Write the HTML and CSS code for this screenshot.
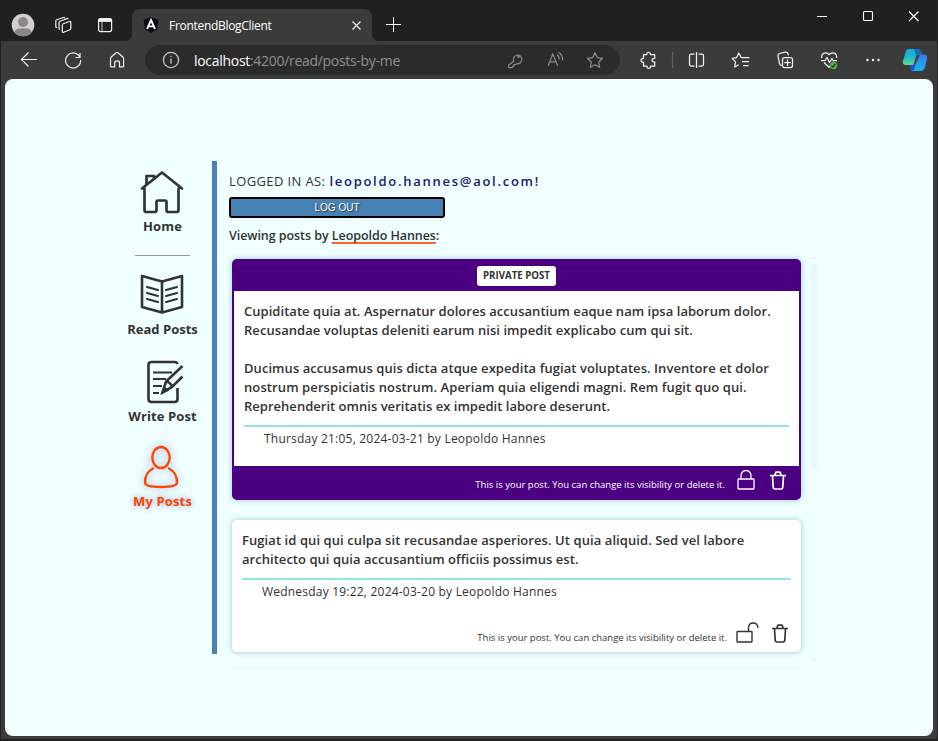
FILE: index.html
```html
<!DOCTYPE html>
<html lang="en">
<head>
<meta charset="utf-8">
<title>FrontendBlogClient</title>
<link rel="stylesheet" href="styles.css">
</head>
<body>
<div class="window">
  <header class="tabbar">
    <svg class="left-icons" width="132" height="41" viewBox="0 0 132 41" fill="none" stroke="#f2f2f2" stroke-width="1.2">
      <circle cx="23" cy="25" r="11.3" fill="#d2d0ce" stroke="none"/>
      <circle cx="23" cy="22" r="5" fill="#8a8886" stroke="none"/>
      <path d="M14.5 32.4C15 28.9 18 28.3 23 28.3s8 .6 8.500 4.100A11.300 11.300 0 0 1 14.500 32.400z" fill="#8a8886" stroke="none"/>
      <path d="M62.500 24l7-2.500q1.300-.4 1.300 1v6q0 .8-.9 1.200l-6.200 2.500q-1.400.5-1.400-1v-6q0-.9.9-1.200z"/>
      <path d="M60 29.500l-.9-.5V22.500q0-.9.8-1.200l7.500-2.800.9.500M57 27.800l-1.200-.7v-6q0-1 .9-1.300l7.300-2.500 1 .6"/>
      <rect x="98.600" y="18.600" width="13" height="13" rx="2"/><path d="M102 22v9.500" stroke-width=".8"/><path d="M99 20.200h12.500" stroke-width="3.400"/>
    </svg>
    <div class="tab">
      <svg class="favicon" width="16" height="16" viewBox="0 0 16 16"><path d="M8 .3l7.400 2.500-1.100 9.700L8 15.800l-6.300-3.300L.6 2.800z" fill="#080b17"/><path d="M4 12l4-9 4 9M5.300 9.400h5.400" fill="none" stroke="#fff" stroke-width="1.900"/></svg>
      <span class="tab-title">FrontendBlogClient</span>
      <svg class="tab-close" width="9" height="9" viewBox="0 0 9 9" stroke="#eee" stroke-width="1.200"><path d="M.5.5l8 8M8.500.5l-8 8"/></svg>
    </div>
    <svg class="new-tab" width="15" height="15" viewBox="0 0 15 15" stroke="#fff"><path d="M7.500 0v15M0 7.500h15"/></svg>
    <svg class="window-buttons" width="120" height="41" viewBox="0 0 120 41" fill="none" stroke="#fff" stroke-width="1.100"><path d="M0 16.500h10M92 11.500l9.500 9.500M101.500 11.500L92 21"/><rect x="46.500" y="11.500" width="9" height="9" rx="1"/></svg>
  </header>
  <nav class="toolbar">
    <svg class="nav-icons" width="145" height="38" viewBox="0 41 145 38" fill="none" stroke="#f0f0f0" stroke-width="1.200">
      <path d="M37 59.500H21.500M28.500 52.500l-7 7 7 7"/>
      <path d="M80 57.500A7.500 7.500 0 1 0 80.600 60M80 53v4.500h-4.600"/>
      <path d="M110.500 58.500q0-.9.7-1.500l5-4.200q.9-.7 1.700 0l5 4.200q.7.600.7 1.500v7.500q0 .9-.9.900h-3.200v-4.200q0-1.800-2.400-1.800t-2.400 1.800v4.200h-3.200q-1 0-1-.9z"/>
    </svg>
    <div class="address">
      <svg class="info" width="18" height="18" viewBox="0 0 18 18" fill="none" stroke="#c8c8c8" stroke-width="1.300"><circle cx="9" cy="9" r="7.600"/><path d="M9 7.800v5M9 4.800v1.500"/></svg>
      <span class="url"><b>localhost</b>:4200/read/posts-by-me</span>
      <svg class="address-icons" width="100" height="20" viewBox="506 50 100 20" fill="none" stroke="#8c8c8c" stroke-width="1.200">
        <path d="M513.700 61.200a4.300 4.300 0 1 1 3.200 2.500l-1.200.8-1.600.2-.2 1.500-1.400.4-.6 1h-3.200v-2.700z" stroke-linejoin="round"/><circle cx="518.500" cy="56.800" r=".6"/>
        <path d="M548 66l4.800-12 4.900 12M549.700 61.800h6.300M557 54.500q2.500 2 2 5M558.500 52.200q4.500 3 4 8"/>
        <path d="M595 52.700l2.300 4.900 5.300.7-3.900 3.700 1 5.300-4.700-2.600-4.700 2.600 1-5.300-3.900-3.700 5.300-.7z" stroke-linejoin="round"/>
      </svg>
    </div>
    <svg class="toolbar-icons" width="300" height="38" viewBox="633 41 300 38" fill="none" stroke="#f0f0f0" stroke-width="1.250" stroke-linejoin="round">
      <defs><linearGradient id="teal" x1="0" y1="0" x2="0" y2="1"><stop offset="0" stop-color="#16a7e8"/><stop offset=".5" stop-color="#20b6c8"/><stop offset="1" stop-color="#61dc88"/></linearGradient><linearGradient id="blue" x1="0" y1="0" x2="0" y2="1"><stop offset="0" stop-color="#3a78e5"/><stop offset="1" stop-color="#12b8f5"/></linearGradient></defs>
      <path d="M643.500 54.500h3.200c-.3-3 4-3 3.700 0h4.300v3.800c-3.600-.4-3.600 4 0 3.700v4.200h-4c.3 3-4 3-3.800 0h-3.400v-3.800c-3.300.2-3.300-4.200 0-4z"/>
      <path d="M672.500 52v16" stroke="#606060"/>
      <path d="M694.500 54h-3.300q-1.700 0-1.700 1.700v8.600q0 1.700 1.700 1.700h3.300M696.500 52v16M698.500 54h3.300q1.700 0 1.700 1.700v8.600q0 1.700-1.700 1.700h-3.300"/>
      <path d="M744 57.500h-2.800L738.800 53l-2.200 4.600-4.300.7 3.200 3.500-.8 5.200 4-2.200M743 57.500h6.500M742 61.500h7M743 65.500h5.500"/>
      <path d="M782 65.500q-2 0-2.500-1.900L778 56q-.3-2 1.500-2.500l6-1.300q2-.2 2.500 1.500l.4 1.700M784.500 57.500h6q2 0 2 2v6q0 2-2 2h-6q-2 0-2-2v-6q0-2 2-2zM787.500 59.500v6.500M784.300 62.500h6.500"/>
      <path d="M821.700 58c-.4-5.500 4.700-6.500 7.300-3.500 3-3.300 8.300-1.500 7.600 3.500M824 62.500l5 4.800 2-2M821 60.500h4l2-3 2.500 5 2.500-4 1 2h4"/>
      <circle cx="833.500" cy="65.500" r="3.700" fill="#4aae52" stroke="none"/><path d="M831.500 66l1.300 1 2.600-3" stroke="#183d1c"/>
      <g fill="#f5f5f5" stroke="none"><circle cx="867.500" cy="60" r="1.200"/><circle cx="873" cy="60" r="1.200"/><circle cx="878.500" cy="60" r="1.200"/></g>
      <g stroke="none"><path d="M910 65l4.500 0 1-1 4.500-9.500h4q4 0 3 4.500l-2 8q-1 4-5 4h-6q-3 0-3-2.500z" fill="url(#blue)"/><path d="M910 65h5l-1 5h-1q-2.300 0-3-3z" fill="#1b4fd8"/><path d="M909 49h9q2 0 3 2.500l1 3.500-4-.5-2 2-2 7q-.5 1.500-2 1.500h-6q-4 0-3-4l2.500-8.500q1-3.500 3.500-3.500z" fill="url(#teal)"/><path d="M914.500 49h4q1.500 0 2.300 2.500l1.200 3.500-4-.5-2 2z" fill="#116bb5"/></g>
    </svg>
  </nav>
  <main class="page">
    <nav class="menu">
      <a class="item home">
        <svg width="44" height="44" viewBox="0 0 44 44" fill="none" stroke="#333" stroke-width="2.700" stroke-linejoin="round" stroke-linecap="round"><path d="M2 18.500L22 2.500l20 16M4.500 18.500V40q0 2 2 2h8q2 0 2-2v-8q0-1.500 1.500-1.500h7q1.500 0 1.500 1.500v8q0 2 2 2h8q2 0 2-2V18.500M6.500 14V6h7.500v2"/></svg>
        <span>Home</span>
      </a>
      <hr>
      <a class="item read">
        <svg width="44" height="42" viewBox="0 0 44 42" fill="none" stroke="#333" stroke-width="2.600" stroke-linejoin="round"><path d="M22 8.500L2 3v31l20 5.500L42 34V3zM22 8.500v31"/><path d="M7 14l11 3M7 20l11 3M7 26l11 3M37 14l-11 3M37 20l-11 3M37 26l-11 3" stroke-linecap="round" stroke-width="2.200"/></svg>
        <span>Read Posts</span>
      </a>
      <a class="item write">
        <svg width="38" height="44" viewBox="0 0 38 44" fill="none" stroke="#333" stroke-width="2.600"><path d="M31.500 4q-.5-2-3-2h-23q-3 0-3 3v34q0 3 3 3h23q3 0 3-3V28"/><path d="M7 12.500h19M7 19h13M7 26h9M7 33h6" stroke-width="2.200"/><path d="M36.500 6L20 21.500l-3.500 11 9.500-5.500L36.500 16.500M20 21.500q5 1 6 5.500"/><path d="M18.500 27l-3 6.500 7-3z" fill="#333" stroke-width="1"/></svg>
        <span>Write Post</span>
      </a>
      <a class="item mine">
        <svg width="36" height="44" viewBox="0 0 36 44" fill="none" stroke="#ff4500" stroke-width="2.400" stroke-linecap="round"><ellipse cx="18" cy="12.500" rx="8.700" ry="10.500"/><path d="M10 23.500C4 26.500 2 31 2 37.500q0 4.500 16 4.500t16-4.500c0-6.500-2-11-8-14"/></svg>
        <span>My Posts</span>
      </a>
    </nav>
    <section class="content">
      <p class="login"><span class="login-label">LOGGED IN AS:</span> <b class="email">leopoldo.hannes@aol.com</b>!</p>
      <button class="logout">LOG OUT</button>
      <p class="viewing"><span>Viewing posts by <u>Leopoldo Hannes</u>:</span></p>
      <div class="feed">
        <div class="posts">
          <article class="post private">
            <header><span>PRIVATE POST</span></header>
            <div class="text">
              <p><span class="l1">Cupiditate quia at. Aspernatur dolores accusantium eaque nam ipsa laborum dolor.</span><br><span class="l2">Recusandae voluptas deleniti earum nisi impedit explicabo cum qui sit.</span></p>
              <p><span class="l3">Ducimus accusamus quis dicta atque expedita fugiat voluptates. Inventore et dolor</span><br><span class="l4">nostrum perspiciatis nostrum. Aperiam quia eligendi magni. Rem fugit quo qui.</span><br><span class="l5">Reprehenderit omnis veritatis ex impedit labore deserunt.</span></p>
            </div>
            <div class="date"><span>Thursday 21:05, 2024-03-21 by Leopoldo Hannes</span></div>
            <footer><span class="note">This is your post. You can change its visibility or delete it.</span>
              <svg class="lock" width="18" height="20" viewBox="0 0 18 20" fill="none" stroke="#fff" stroke-width="1.300"><rect x="1" y="9" width="16" height="10" rx=".7"/><path d="M4 9V5.500a5 5 0 0 1 10 0V9"/></svg>
              <svg class="trash" width="16" height="19" viewBox="0 0 16 19" fill="none" stroke="#fff" stroke-width="1.700"><path d="M0 4.500h16M5 4.500L5.500 2q.2-.8 1-.8h3q.8 0 1 .8l.5 2.500M2.500 5l.7 11q.1 2 2 2h5.600q1.900 0 2-2l.7-11"/></svg>
            </footer>
          </article>
          <article class="post public">
            <div class="text"><p><span class="l6">Fugiat id qui qui culpa sit recusandae asperiores. Ut quia aliquid. Sed vel labore</span><br><span class="l7">architecto qui quia accusantium officiis possimus est.</span></p></div>
            <div class="date"><span>Wednesday 19:22, 2024-03-20 by Leopoldo Hannes</span></div>
            <footer><span class="note">This is your post. You can change its visibility or delete it.</span>
              <svg class="unlock" width="23" height="21" viewBox="0 0 23 21" fill="none" stroke="#333" stroke-width="1.400"><rect x="1" y="9.500" width="15" height="10.500" rx=".7"/><path d="M12.500 9.500V6q0-5 4.700-5Q21.500 1 22 6"/></svg>
              <svg class="trash" width="16" height="19" viewBox="0 0 16 19" fill="none" stroke="#333" stroke-width="1.700"><path d="M0 4.500h16M5 4.500L5.500 2q.2-.8 1-.8h3q.8 0 1 .8l.5 2.500M2.500 5l.7 11q.1 2 2 2h5.600q1.900 0 2-2l.7-11"/></svg>
            </footer>
          </article>
          <div class="feed-end"></div>
        </div>
        <div class="scrollbar"><i class="up"></i><div class="thumb"></div><i class="down"></i></div>
      </div>
    </section>
  </main>
</div>
</body>
</html>
```
FILE: styles.css
```css
* { box-sizing: border-box; }
body { margin: 0; font-family: "Open Sans", "Noto Sans", sans-serif; color: #333; }
p { margin: 0; }
svg { display: block; flex: none; }
.window { width: 938px; height: 741px; background: #3b3b3b; overflow: hidden; border-left: 1px solid #222; border-bottom: 2px solid #202020; border-right: 1px solid #252529; }
.tabbar { height: 41px; background: #202020; display: flex; align-items: flex-start; }
.left-icons { margin-left: -1px; }
.tab { position: relative; width: 240px; height: 32px; margin-top: 9px; background: #3b3b3b; border-radius: 8px 8px 0 0; display: flex; align-items: center; padding-left: 11px; }
.tab::before, .tab::after { content: ""; position: absolute; bottom: 0; width: 6px; height: 6px; }
.tab::before { left: -6px; background: radial-gradient(circle at 0 0, #202020 5.500px, #3b3b3b 6px); }
.tab::after { right: -6px; background: radial-gradient(circle at 100% 0, #202020 5.500px, #3b3b3b 6px); }
.tab-title { margin-left: 10px; font: 12px "Open Sans", sans-serif; color: #fff; width: 103px; white-space: nowrap; letter-spacing: -.3px; }
.tab-close { margin-left: 80px; }
.new-tab { margin: 17px 0 0 14px; }
.window-buttons { margin-left: 416px; }
.toolbar { height: 38px; display: flex; align-items: center; }
.nav-icons { margin-left: -1px; }
.address { width: 475px; height: 30px; background: #2b2b2b; border-radius: 15px; display: flex; align-items: center; padding-left: 17px; }
.url { margin-left: 14px; width: 312px; white-space: nowrap; font-size: 14px; color: #8f8f8f; letter-spacing: -.3px; }
.url b { color: #fff; font-weight: 400; }
.toolbar-icons { margin-left: 13px; }
.page { margin-left: 4px; width: 928px; height: 657px; border-radius: 8px; background: #f0ffff; padding: 82px 0 0 115px; display: flex; align-items: flex-start; }
.menu { width: 92px; height: 493px; display: flex; flex-direction: column; align-items: center; padding-right: 7px; }
.item { display: flex; flex-direction: column; align-items: center; font-size: 13px; font-weight: 700; line-height: 18px; white-space: nowrap; }
.item svg { position: relative; left: -1px; }
.menu hr { width: 55px; height: 1px; border: 0; background: #999; margin: 20px 0 0; }
.home { margin-top: 9px; }
.home span { margin-top: 3px; letter-spacing: .2px; }
.read { margin-top: 17px; }
.read span { margin-top: 5px; }
.write { margin-top: 22px; }
.write svg { margin-left: 6px; }
.write span { margin-top: 3px; letter-spacing: .1px; }
.mine { margin-top: 20px; color: #ff4500; text-shadow: 0 0 6px #8c9bd4; letter-spacing: .15px; }
.mine svg { filter: drop-shadow(0 0 4px #8c9bd4); overflow: visible; }
.mine span { margin-top: 3px; }
.content { width: 612px; height: 493px; border-left: 5px solid #4682b4; padding-left: 12px; }
.login { margin-top: 11px; height: 19px; font-size: 13px; line-height: 19px; font-weight: 600; white-space: nowrap; }
.login-label { display: inline-block; width: 97px; font-weight: 500; letter-spacing: .38px; }
.email { color: #191970; font-weight: 600; letter-spacing: 1.730px; }
.logout { display: block; width: 216px; height: 21px; margin-top: 6px; padding: 0; border: 2px solid #000; border-radius: 3px; background: #4682b4; color: #fff; font: 10px "Liberation Sans", sans-serif; text-shadow: 1px 1px 1px #333; }
.viewing { margin-top: 8px; height: 19px; line-height: 19px; font-size: 12.5px; font-weight: 600; letter-spacing: -.06px; }
.viewing u { text-decoration-color: #ff6130; text-decoration-thickness: 2px; text-underline-offset: 2px; text-decoration-skip-ink: none; }
.feed { margin-top: 10px; display: flex; justify-content: space-between; width: 588px; height: 412px; }
.posts { padding: 4px 0 0 3px; width: 573px; }
.post { width: 569px; border-radius: 5px; background: #fff; box-shadow: 0 0 5px 1px #add4e2; white-space: nowrap; }
.private { height: 241px; border: 2px solid #4b0082; }
.private header { height: 30px; background: #4b0082; display: flex; justify-content: center; align-items: center; }
.private header span { height: 20px; width: 79px; text-align: center; background: #fff; border-radius: 3px; font-size: 9.700px; line-height: 20px; font-weight: 700; }
.text { font-size: 13px; line-height: 19px; font-weight: 600; padding: 11px 10px 0; }
.text p + p { margin-top: 19px; }
.l1, .l7 { letter-spacing: .037px; }
.l2, .l3 { letter-spacing: .06px; }
.l4 { letter-spacing: .1px; }
.l5 { letter-spacing: .02px; }
.l6 { letter-spacing: .078px; }
.date { margin: 9px 10px 0; border-top: 2px solid #91e3e8; height: 41px; padding-left: 20px; font-size: 12px; line-height: 23px; letter-spacing: .21px; }
.private footer { background: #4b0082; color: #fff; height: 32px; }
.post footer { display: flex; align-items: flex-start; justify-content: flex-end; padding-right: 13px; font-size: 9.500px; }
.note { line-height: 14px; margin-top: 11px; }
.private .note { margin-top: 12px; }
.lock { margin: 4px 0 0 12px; }
.unlock { margin: 2px 0 0 9px; }
.private .trash { margin: 5px 0 0 15px; }
.public { margin-top: 20px; height: 132px; }
.public .date { height: 42px; }
.public footer { padding-right: 13px; }
.public .trash { margin: 4px 0 0 13px; }
.feed-end { margin-top: 15px; height: 1px; background: #e8f9fa; }
.scrollbar { width: 6px; display: flex; flex-direction: column; align-items: center; }
.up { border: 3px solid transparent; border-bottom-color: #e0f5f6; height: 6px; margin-top: -2px; }
.thumb { width: 6px; height: 204px; margin-top: 5px; border-radius: 3px; background: #e7f8fa; }
.down { border: 3px solid transparent; border-top-color: #e0f5f6; margin-top: 190px; }
```
